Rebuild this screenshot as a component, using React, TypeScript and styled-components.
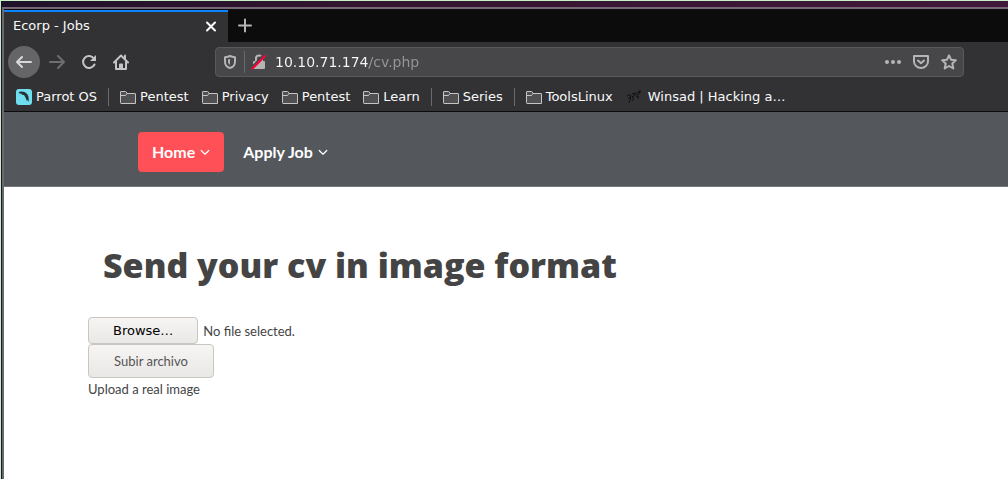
import React, { useRef } from 'react';
import styled, { createGlobalStyle, css } from 'styled-components';

const GlobalStyle = createGlobalStyle`
  * { box-sizing: border-box; }
  body { margin: 0; background: #fff; }
  button, input { font: inherit; }
`;

const Desktop = styled.div`
  min-height: 100vh;
  display: flex;
  flex-direction: column;
  border-top: 1px solid #c9efc6;
  border-left: 1px solid #c9efc6;
  background: linear-gradient(90deg, #1f122a, #33152f 35%, #42183a);
  padding: 6px 0 0 1px;
  font-family: 'DejaVu Sans', sans-serif;
`;

const Window = styled.div`
  flex: 1;
  display: flex;
  flex-direction: column;
  border-top: 2px solid #77697a;
  border-left: 2px solid #6c6870;
  background: #fff;
`;

const TabStrip = styled.div`
  height: 33px;
  display: flex;
  align-items: stretch;
  gap: 1px;
  padding-top: 1px;
  background: #0c0c0d;
`;

const Tab = styled.div`
  width: 224px;
  display: flex;
  align-items: center;
  justify-content: space-between;
  padding: 0 9px 2px;
  border-top: 2px solid #0a84ff;
  background: #323234;
  color: #f9f9fa;
  font-size: 13px;
  line-height: 16px;
`;

const IconButton = styled.button<{ $size?: number; $tone?: string }>`
  width: ${p => p.$size ?? 32}px;
  height: ${p => p.$size ?? 32}px;
  flex: none;
  display: flex;
  align-items: center;
  justify-content: center;
  padding: 0;
  border: 0;
  border-radius: 50%;
  background: transparent;
  color: ${p => p.$tone ?? '#c4c4c5'};
`;

const BackButton = styled(IconButton)`
  margin-right: 1px;
  background: #656567;
`;

const NavigationBar = styled.div`
  height: 40px;
  display: flex;
  align-items: center;
  padding: 0 44px 0 4px;
  background: #323234;
`;

const AddressBar = styled.div`
  flex: 1;
  height: 30px;
  display: flex;
  align-items: center;
  margin-left: 78px;
  padding: 0 2px 0 6px;
  border: 1px solid #59595b;
  border-radius: 4px;
  background: #474749;
  color: #b5b5b6;
`;

const AddressDivider = styled.span`
  width: 1px;
  height: 22px;
  margin: 0 6px;
  background: #646a74;
`;

const AddressInput = styled.input`
  flex: 1;
  min-width: 0;
  height: 28px;
  margin-left: 8px;
  padding: 0;
  border: 0;
  outline: 0;
  font-size: 14px;
  background: linear-gradient(90deg, #f9f9fa 94px, #969697 94px);
  background-clip: text;
  -webkit-background-clip: text;
  -webkit-text-fill-color: transparent;
`;

const AddressActions = styled.div`
  display: flex;
  gap: 4px;
`;

const BookmarksBar = styled.nav`
  height: 30px;
  display: flex;
  align-items: center;
  gap: 13px;
  padding: 0 12px;
  border-bottom: 1px solid #0c0c0d;
  background: #323234;
`;

const Bookmark = styled.a<{ $wide?: boolean }>`
  display: flex;
  align-items: center;
  gap: ${p => (p.$wide ? 6 : 4)}px;
  color: #f9f9fa;
  font-size: 13px;
  line-height: 16px;
  text-decoration: none;
  white-space: nowrap;
`;

const BookmarkDivider = styled.span`
  width: 1px;
  height: 18px;
  margin: 0 -2px;
  background: #6b6b6d;
`;

const SiteHeader = styled.header`
  height: 75px;
  display: flex;
  align-items: center;
  gap: 5px;
  padding: 6px 134px 0;
  border-bottom: 1px solid #73767b;
  background: #54575c;
`;

const MenuLink = styled.a<{ $active?: boolean }>`
  height: 40px;
  display: flex;
  align-items: center;
  gap: 5px;
  padding: 0 14px;
  border-radius: 4px;
  background: ${p => (p.$active ? '#ff4f57' : 'transparent')};
  color: #fff;
  font: 700 16px/20px Lato, sans-serif;
  text-decoration: none;
`;

const Content = styled.main`
  padding: 55px 84px;
  color: #444;
  font: 400 13px/20px Lato, sans-serif;
`;

const Title = styled.h1`
  margin: 0 0 28px 15px;
  color: #444;
  font: 800 34px/47px 'Open Sans', sans-serif;
`;

const FileRow = styled.div`
  display: flex;
  align-items: center;
  gap: 5px;
`;

const FileInput = styled.input`
  display: none;
`;

const control = css`
  padding: 0 24px;
  border: 1px solid #c9c5c0;
  border-radius: 4px;
  background: linear-gradient(#f6f5f4, #eae8e6);
`;

const BrowseButton = styled.button`
  ${control}
  height: 27px;
  color: #000;
  font: 13px/16px 'DejaVu Sans', sans-serif;
`;

const SubmitButton = styled.button`
  ${control}
  display: block;
  min-width: 126px;
  height: 34px;
  color: #555;
`;

const Message = styled.p`
  margin: 1px 0 0;
`;

const Line = ({ d, size = 16, width = 2 }: { d: string; size?: number; width?: number }) => (
  <svg width={size} height={size} viewBox="0 0 16 16" fill="none" stroke="currentColor" strokeWidth={width} strokeLinecap="round" strokeLinejoin="round" aria-hidden="true">
    <path d={d} />
  </svg>
);

const FolderIcon = () => (
  <svg width="16" height="16" viewBox="0 0 16 16" aria-hidden="true">
    <path d="M.5 13.5V3Q.5 2.500 1 2.500H5.500Q6.500 2.500 7 4.500H15Q15.500 4.500 15.500 5V14.500H1Q.5 14.500.5 13.500Z" fill="#505052" stroke="#c5c5c6" />
    <path d="M1 6.500H5.500L7 4.500" fill="none" stroke="#c5c5c6" />
  </svg>
);

const ParrotIcon = () => (
  <svg width="16" height="16" viewBox="0 0 16 16" aria-hidden="true">
    <rect width="16" height="16" rx="3" fill="#6fdfef" />
    <path d="M2.500 3C6 1.800 9.500 2.600 11.500 5.500C12.800 7.500 13 10.500 12.600 13L11.300 10.500L11 12.500L9.500 8.500L8 6L6 5.800L5.500 4.800L3.500 4.400Z" fill="#273238" />
  </svg>
);

const WinsadIcon = () => (
  <svg width="16" height="16" viewBox="0 0 16 16" fill="none" stroke="#111" aria-hidden="true">
    <path d="M1 7L4 5.500L5 7L2 10M3 14L5 8M6 5L9 4L8 7L6 8L8 9L6 12M9 5L14 2L13 5L10 7L13 8L11 10M14 1V4" strokeWidth="1" />
  </svg>
);

const ShieldIcon = () => (
  <svg width="16" height="16" viewBox="0 0 16 16" fill="none" stroke="currentColor" aria-hidden="true">
    <path d="M8 2Q10 3 13 3.200V7.500C13 11 11 13.300 8 14C5 13.300 3 11 3 7.500V3.200Q6 3 8 2Z" strokeWidth="2" strokeLinejoin="round" />
    <path d="M8 5V11C6.800 10.200 6 9 6 7.500V5.500Z" fill="currentColor" stroke="none" />
  </svg>
);

const InsecureIcon = () => (
  <svg width="16" height="16" viewBox="0 0 16 16" aria-hidden="true">
    <path d="M5 8V4.500A3 3 0 0 1 11 4.500V8" fill="none" stroke="currentColor" strokeWidth="2" />
    <rect x="2" y="7" width="12" height="8" rx="1" fill="currentColor" />
    <path d="M1 14L13 1" stroke="#474749" strokeWidth="3" />
    <path d="M1.500 14.500L14 2" stroke="#ff0039" strokeWidth="2" strokeLinecap="round" />
  </svg>
);

const HomeIcon = () => (
  <svg width="16" height="16" viewBox="0 0 16 16" fill="none" stroke="currentColor" strokeWidth="2" strokeLinecap="round" strokeLinejoin="round" aria-hidden="true">
    <path d="M1 8.500L8 1.500L15 8.500M3 8V15H13V8" />
    <path d="M7 15V10.500H9V15" />
    <path d="M12 1.500V4.500" />
  </svg>
);

const ReloadIcon = () => (
  <svg width="16" height="16" viewBox="0 0 16 16" fill="none" stroke="currentColor" strokeWidth="2" aria-hidden="true">
    <path d="M13 4.500A6 6 0 1 0 13.500 10.500" strokeLinecap="round" />
    <path d="M15 1V7H9Z" fill="currentColor" stroke="none" />
  </svg>
);

const PocketIcon = () => (
  <svg width="16" height="16" viewBox="0 0 16 16" fill="none" stroke="currentColor" strokeWidth="2" strokeLinecap="round" strokeLinejoin="round" aria-hidden="true">
    <path d="M1 2H15V7.500A7 6.500 0 0 1 1 7.500Z" />
    <path d="M5 6.500L8 9.200L11 6.500" />
  </svg>
);

const DotsIcon = () => (
  <svg width="16" height="16" viewBox="0 0 16 16" fill="currentColor" aria-hidden="true">
    <circle cx="2" cy="8" r="2" />
    <circle cx="8" cy="8" r="2" />
    <circle cx="14" cy="8" r="2" />
  </svg>
);

const Chevron = () => <Line size={10} width={2} d="M2 5.500L8 11.500L14 5.500" />;

const groups = [['Pentest', 'Privacy', 'Pentest', 'Learn'], ['Series'], ['ToolsLinux']];

export default function App() {
  const file = useRef<HTMLInputElement>(null);
  return (
    <Desktop>
      <GlobalStyle />
      <Window>
        <TabStrip>
          <Tab>
            Ecorp - Jobs
            <IconButton $size={16} $tone="#f9f9fa" aria-label="Close tab">
              <Line d="M4 4.500L12 12.500M12 4.500L4 12.500" />
            </IconButton>
          </Tab>
          <IconButton $tone="#b5b5b6" aria-label="New tab">
            <Line d="M8 1.500V13.500M2 7.500H14" />
          </IconButton>
        </TabStrip>
        <NavigationBar>
          <BackButton $tone="#d8d8d9" aria-label="Back">
            <Line d="M15 8H1M6 3L1 8L6 13" />
          </BackButton>
          <IconButton $tone="#6e6e70" aria-label="Forward">
            <Line d="M1 8H15M9 2L15 8L9 14" />
          </IconButton>
          <IconButton aria-label="Reload">
            <ReloadIcon />
          </IconButton>
          <IconButton aria-label="Home page">
            <HomeIcon />
          </IconButton>
          <AddressBar>
            <ShieldIcon />
            <AddressDivider />
            <InsecureIcon />
            <AddressInput aria-label="Address" defaultValue="10.10.71.174/cv.php" />
            <AddressActions>
              <IconButton $size={24} $tone="#b5b5b6" aria-label="Page actions">
                <DotsIcon />
              </IconButton>
              <IconButton $size={24} $tone="#b5b5b6" aria-label="Save to Pocket">
                <PocketIcon />
              </IconButton>
              <IconButton $size={24} $tone="#b5b5b6" aria-label="Bookmark this page">
                <Line d="M8 1.300L10 5.700L14.800 6.200L11.300 9.500L12.300 14.500L8 12L3.700 14.500L4.700 9.500L1.200 6.200L6 5.700Z" />
              </IconButton>
            </AddressActions>
          </AddressBar>
        </NavigationBar>
        <BookmarksBar>
          <Bookmark href="#parrot">
            <ParrotIcon />
            Parrot OS
          </Bookmark>
          {groups.map((group, g) => (
            <React.Fragment key={g}>
              <BookmarkDivider />
              {group.map((name, i) => (
                <Bookmark key={i} href="#folder">
                  <FolderIcon />
                  {name}
                </Bookmark>
              ))}
            </React.Fragment>
          ))}
          <Bookmark $wide href="#winsad">
            <WinsadIcon />
            Winsad | Hacking a…
          </Bookmark>
        </BookmarksBar>
        <SiteHeader>
          <MenuLink $active href="#home">
            Home
            <Chevron />
          </MenuLink>
          <MenuLink href="#apply">
            Apply Job
            <Chevron />
          </MenuLink>
        </SiteHeader>
        <Content>
          <Title>Send your cv in image format</Title>
          <form onSubmit={e => e.preventDefault()}>
            <FileRow>
              <FileInput ref={file} type="file" accept="image/*" aria-label="CV image" />
              <BrowseButton type="button" onClick={() => file.current?.click()}>
                Browse…
              </BrowseButton>
              <span>No file selected.</span>
            </FileRow>
            <SubmitButton type="submit">Subir archivo</SubmitButton>
          </form>
          <Message>Upload a real image</Message>
        </Content>
      </Window>
    </Desktop>
  );
}
